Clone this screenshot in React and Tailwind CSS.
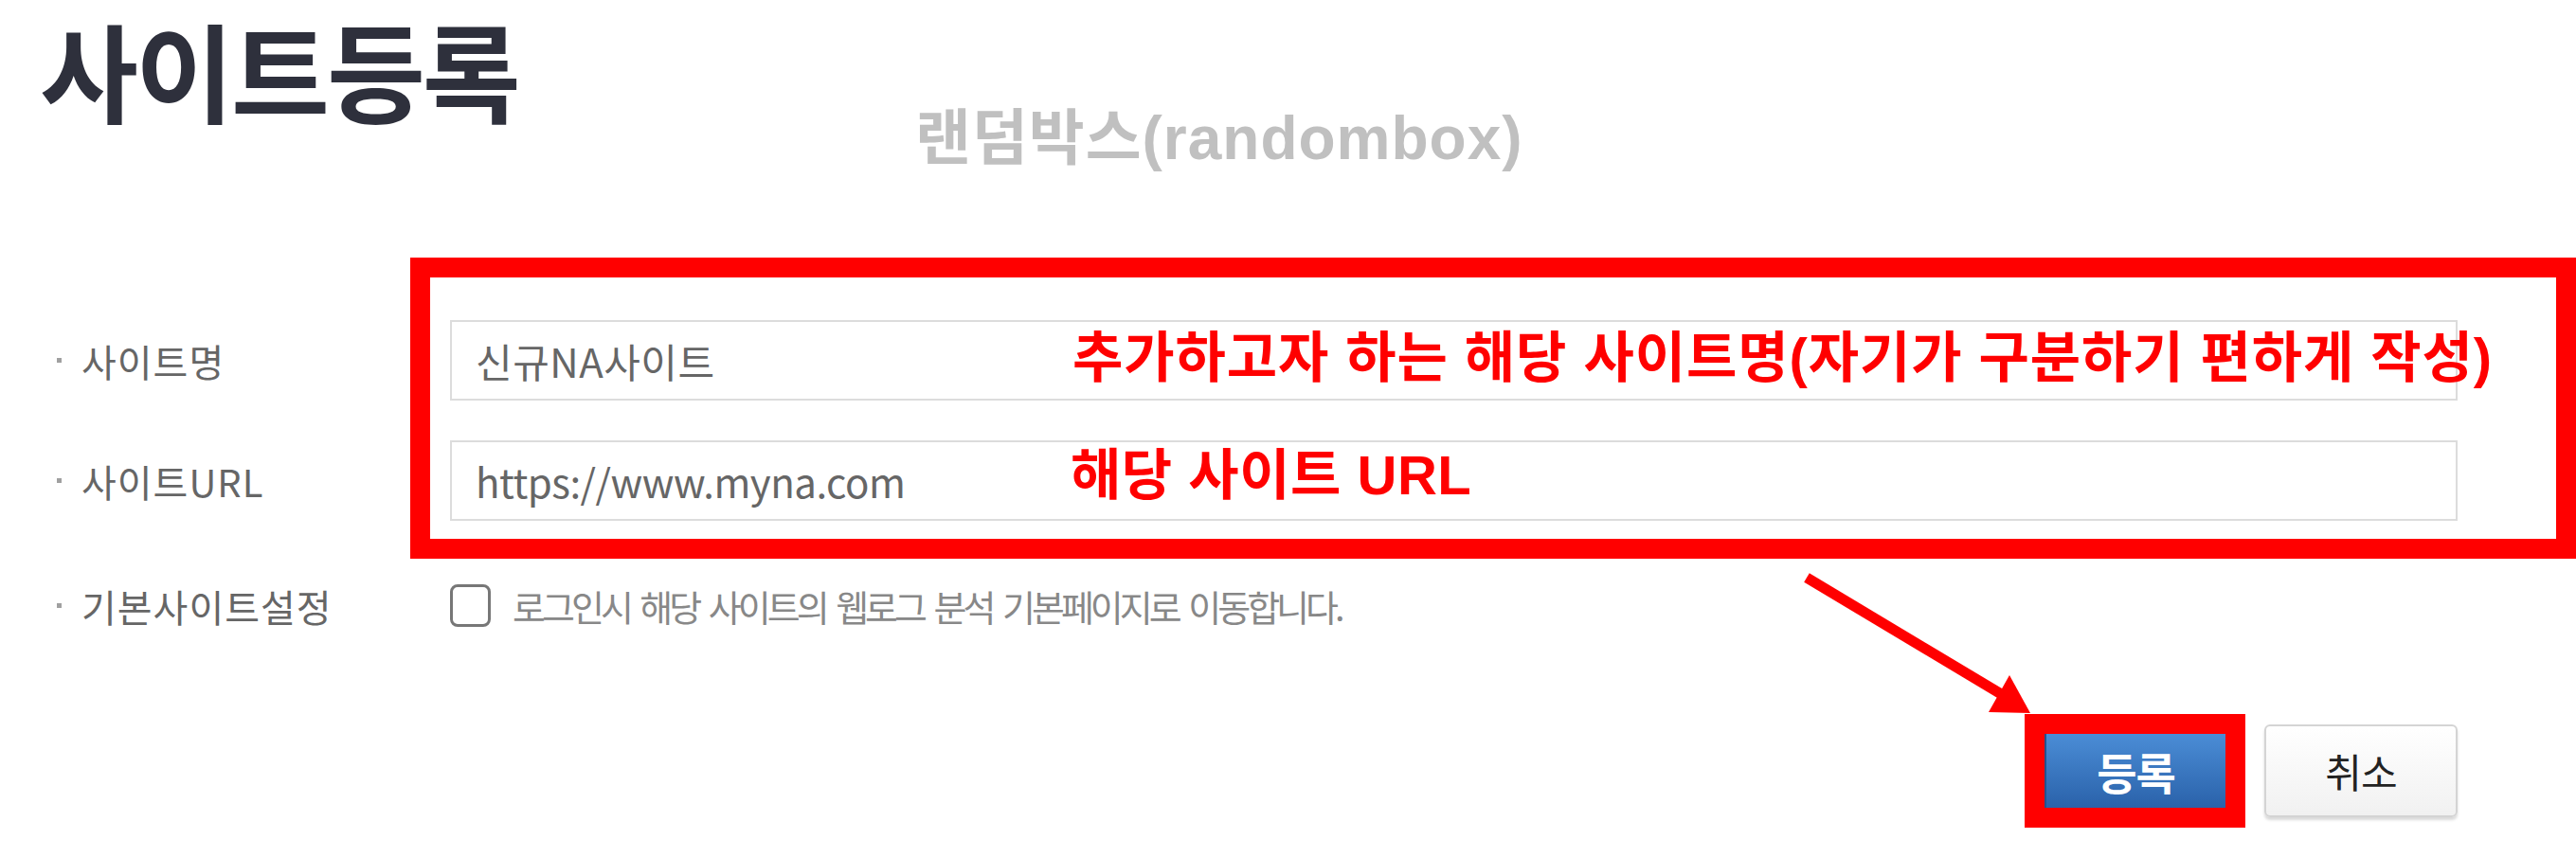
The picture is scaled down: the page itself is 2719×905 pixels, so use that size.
import React from 'react';

const Label = ({ children }) => (
  <div className="w-[415px] shrink-0 flex items-center">
    <span className="w-[5px] h-[5px] bg-[#a0a0a0] mr-[21px]" />
    <span className="text-[40px] leading-none tracking-[1px] text-[#666]">{children}</span>
  </div>
);

const Arrow = () => (
  <svg className="absolute left-[1890px] top-[595px]" width="270" height="170" viewBox="0 0 270 170">
    <line x1="17" y1="15" x2="224" y2="139" stroke="#ff0000" strokeWidth="11" />
    <polygon points="253,158 231,118 209,157" fill="#ff0000" />
  </svg>
);

const App = () => {
  return (
    <div className="relative w-[2719px] h-[905px] overflow-hidden bg-white font-['Noto_Sans_CJK_KR',sans-serif]">
      {/* header */}
      <div className="flex items-start h-[338px] pt-[2px]">
        <div className="w-[924px] shrink-0 pl-[42px]">
          <h1 className="inline-block pr-[8px] text-[113px] leading-[1.25] font-bold tracking-[-3px] text-[#2e303c]">사이트등록</h1>
        </div>
        <div className="mt-[112px] ml-[42px] text-[64px] leading-none font-bold tracking-[1px] text-[#c0c0c0] font-['Liberation_Sans','Noto_Sans_CJK_KR',sans-serif]">
          랜덤박스(randombox)
        </div>
      </div>

      {/* form */}
      <div className="pl-[60px] flex flex-col">
        <div className="flex items-center h-[85px]">
          <Label>사이트명</Label>
          <div className="w-[2119px] h-[85px] border-2 border-[#dcdcdc] flex items-center px-[25px]">
            <span className="text-[42px] leading-none tracking-[0.5px] text-[#666]">신규NA사이트</span>
          </div>
        </div>
        <div className="flex items-center h-[85px] mt-[42px]">
          <Label>사이트URL</Label>
          <div className="w-[2119px] h-[85px] border-2 border-[#dcdcdc] flex items-center px-[25px]">
            <span className="text-[42px] leading-none tracking-[-0.5px] text-[#666]">https://www.myna.com</span>
          </div>
        </div>
        <div className="flex items-center h-[45px] mt-[67px]">
          <Label>기본사이트설정</Label>
          <span className="w-[43px] h-[45px] rounded-[8px] border-[3px] border-[#777] bg-white shrink-0" />
          <span className="ml-[23px] text-[38px] leading-none tracking-[-4px] [word-spacing:6px] text-[#888]">
            로그인시 해당 사이트의 웹로그 분석 기본페이지로 이동합니다.
          </span>
        </div>

        <div className="flex items-center justify-end gap-[41px] w-[2534px] mt-[103px]">
          <div className="relative">
            <button className="w-[191px] h-[78px] bg-gradient-to-b from-[#4b8dd6] to-[#2a62aa] border-l-2 border-[#22528f] text-white text-[46px] font-bold leading-none tracking-[-1px]">
              등록
            </button>
            <span className="absolute -inset-[21px] border-[21px] border-[#ff0000] pointer-events-none" />
          </div>
          <button className="w-[204px] h-[98px] rounded-[6px] border-2 border-[#d4d4d4] bg-gradient-to-b from-white to-[#f1f1f1] shadow-[0_3px_3px_rgba(0,0,0,0.15)] text-[#222] text-[42px] leading-none tracking-[-1px]">
            취소
          </button>
        </div>
      </div>

      {/* annotations */}
      <div className="absolute left-[433px] top-[272px] w-[2286px] h-[318px] border-[21px] border-[#ff0000] pointer-events-none" />
      <div className="absolute left-[1132px] top-[349px] text-[58px] leading-none font-bold tracking-[0.9px] text-[#ff0000] font-['Liberation_Sans','Noto_Sans_CJK_KR',sans-serif] whitespace-nowrap">
        추가하고자 하는 해당 사이트명(자기가 구분하기 편하게 작성)
      </div>
      <div className="absolute left-[1130px] top-[473px] text-[58px] leading-none font-bold tracking-[0.5px] text-[#ff0000] font-['Liberation_Sans','Noto_Sans_CJK_KR',sans-serif] whitespace-nowrap">
        해당 사이트 URL
      </div>
      <Arrow />
    </div>
  );
};

export default App;
